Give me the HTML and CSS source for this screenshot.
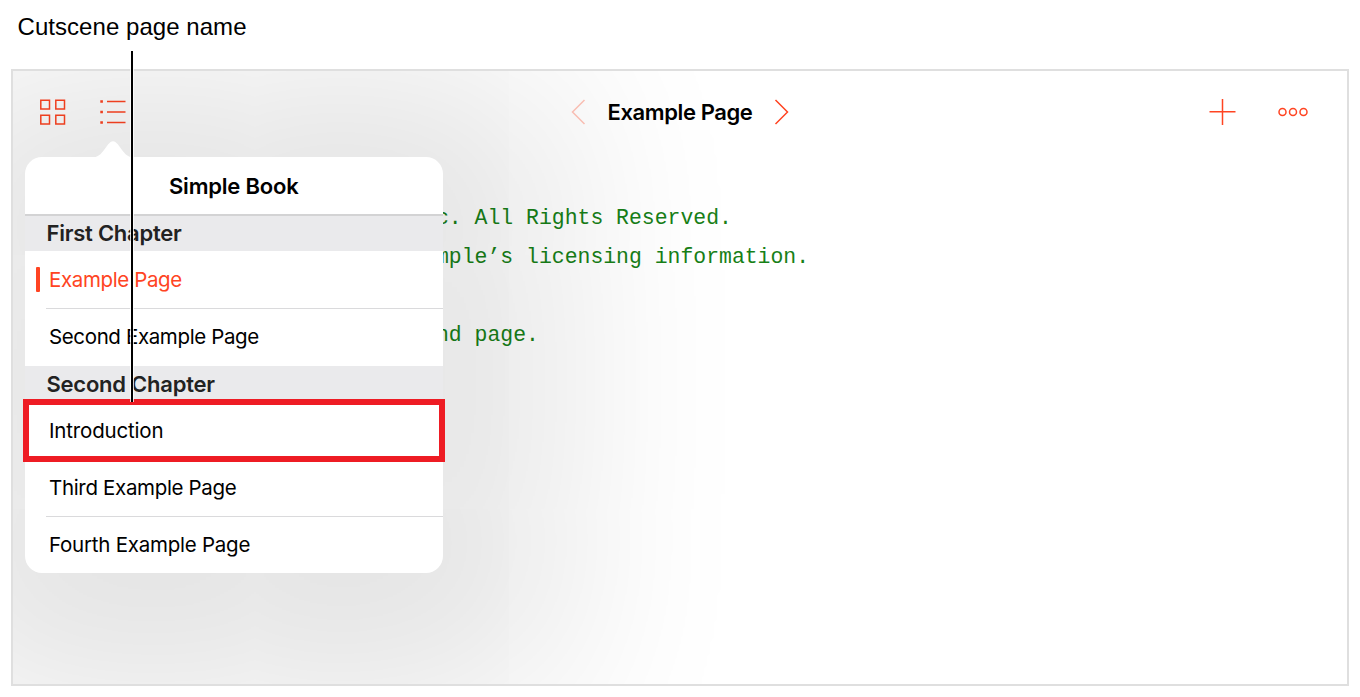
FILE: index.html
```html
<!DOCTYPE html>
<html lang="en">
<head>
<meta charset="utf-8">
<title>Simple Book</title>
<link rel="stylesheet" href="styles.css">
</head>
<body>
<div class="figure">
  <div class="caption"><span>Cutscene page name</span></div>
  <div class="window">
    <header class="toolbar">
      <div class="tools-left">
        <svg class="icon-grid" width="26" height="26" viewBox="0 0 26 26"><path d="M.8 1.300h8.7V10H.8zM15.8 1.300h8.7V10h-8.7zM.8 16.300h8.7V25H.8zM15.8 16.300h8.7V25h-8.7z"/></svg>
        <svg class="icon-list" width="26" height="26" viewBox="0 0 26 26"><path class="lines" d="M7 2.500h18.500M7 13h18.500M7 23.500h18.500"/><path class="dots" d="M.3 1.200h2.600v2.600H.3zM.3 11.700h2.600v2.600H.3zM.3 22.200h2.600v2.600H.3z"/></svg>
      </div>
      <div class="navigator">
        <svg class="chevron dim" width="15" height="26" viewBox="0 0 15 26"><path d="M13.500 1 1.500 13l12 12"/></svg>
        <h1 class="page-title"><span>Example Page</span></h1>
        <svg class="chevron" width="15" height="26" viewBox="0 0 15 26"><path d="m1.500 1 12 12-12 12"/></svg>
      </div>
      <div class="tools-right">
        <svg class="icon-plus" width="28" height="28" viewBox="0 0 28 28"><path d="M14.500 1v26M1.500 13.800h26"/></svg>
        <svg class="icon-more" width="30" height="10" viewBox="0 0 30 10"><circle cx="4.500" cy="5" r="3.500"/><circle cx="15" cy="5" r="3.500"/><circle cx="25.500" cy="5" r="3.500"/></svg>
      </div>
    </header>
    <pre class="code">c. All Rights Reserved.
mple’s licensing information.

nd page.</pre>
    <nav class="popover">
      <svg class="arrow" width="44" height="18" viewBox="0 0 44 18"><path d="M0 17.500C7 17.500 10 14 13 10l4-5.500c3.500-4.500 6.500-4.500 10 0L31 10c3 4 6 7.500 13 7.500z"/></svg>
      <h2 class="book-title"><span>Simple Book</span></h2>
      <h3 class="chapter first"><span>First Chapter</span></h3>
      <ul class="pages">
        <li class="page current"><span>Example Page</span></li>
        <li class="page"><span>Second Example Page</span></li>
      </ul>
      <h3 class="chapter"><span>Second Chapter</span></h3>
      <ul class="pages lower">
        <li class="page intro"><span>Introduction</span></li>
        <li class="page third"><span>Third Example Page</span></li>
        <li class="page fourth"><span>Fourth Example Page</span></li>
      </ul>
    </nav>
  </div>
  <div class="highlight"></div>
  <div class="leader"></div>
</div>
</body>
</html>
```
FILE: styles.css
```css
* { box-sizing: border-box; }
body { margin: 0; background: #fff; color: #000; font-family: Inter, "Liberation Sans", sans-serif; overflow: hidden; }
h1, h2, h3, ul, pre { margin: 0; padding: 0; }
svg { display: block; fill: none; stroke: #ff4422; stroke-width: 1.5; overflow: visible; }

.figure { position: relative; width: 1360px; height: 697px; padding: 0 11px 11px 11px; display: flex; flex-direction: column; }
.caption { flex: 0 0 69px; padding: 12px 0 0 6.500px; font: 24px/30px "Liberation Sans", Arial, sans-serif; letter-spacing: .05px; }
.window { position: relative; flex: 1; border: 2px solid #dfdfdf; overflow: hidden; background: #fff; }

.toolbar { display: grid; grid-template-columns: 1fr auto 1fr; align-items: center; height: 82px; padding: 0 27px; }
.tools-left { display: flex; gap: 34px; }
.tools-right { display: flex; align-items: center; justify-content: flex-end; gap: 42px; padding-right: 12px; }
.navigator { display: flex; align-items: center; gap: 22px; }
.page-title { font-size: 22px; line-height: 28px; font-weight: 600; letter-spacing: -.4px; }
.chevron.dim { opacity: .32; }
.icon-list .dots { fill: #ff4422; stroke: none; }

.code { padding: 46px 0 0 423px; font: 21.45px/39px "Liberation Mono", monospace; color: #178017; }

.popover { position: absolute; left: 12px; top: 86px; width: 417.500px; height: 416px; border-radius: 17px; background: #fff; box-shadow: 6px 23px 190px 112px rgba(0, 0, 0, .11); }
.arrow { position: absolute; left: 66px; top: -17px; fill: #fff; stroke: none; }
.book-title { height: 59px; padding-top: 1px; border-bottom: 2px solid #d3d3d4; text-align: center; font-size: 22px; line-height: 57px; font-weight: 600; letter-spacing: -.2px; }
.chapter { height: 35px; padding-left: 21.500px; background: #eaeaec; color: #222; font-size: 22px; line-height: 36px; font-weight: 600; letter-spacing: -.24px; }
.chapter.first { line-height: 35px; }
.pages { list-style: none; height: 115px; }
.pages.lower { height: 172px; }
.page { position: relative; height: 57px; margin-left: 21px; padding-left: 3px; font-size: 20.500px; line-height: 58px; letter-spacing: -.37px; }
.page + .page { height: 58px; border-top: 1px solid #dadadc; line-height: 55px; }
.page + .third { line-height: 57px; letter-spacing: -.33px; }
.page + .fourth { letter-spacing: -.24px; }
.current { color: #ff4422; }
.current::before { content: ""; position: absolute; left: -10px; top: 16px; width: 4px; height: 25px; border-radius: 1px; background: #ff4422; }
.page.intro { line-height: 59px; letter-spacing: -.17px; }

.leader { position: absolute; left: 130px; top: 51px; width: 4px; height: 351px; border: solid rgba(255, 255, 255, .8); border-width: 0 1px; background: #000; background-clip: padding-box; }
.highlight { position: absolute; left: 22.500px; top: 399px; width: 422.500px; height: 63px; border: 6px solid #ee1c24; }
```
